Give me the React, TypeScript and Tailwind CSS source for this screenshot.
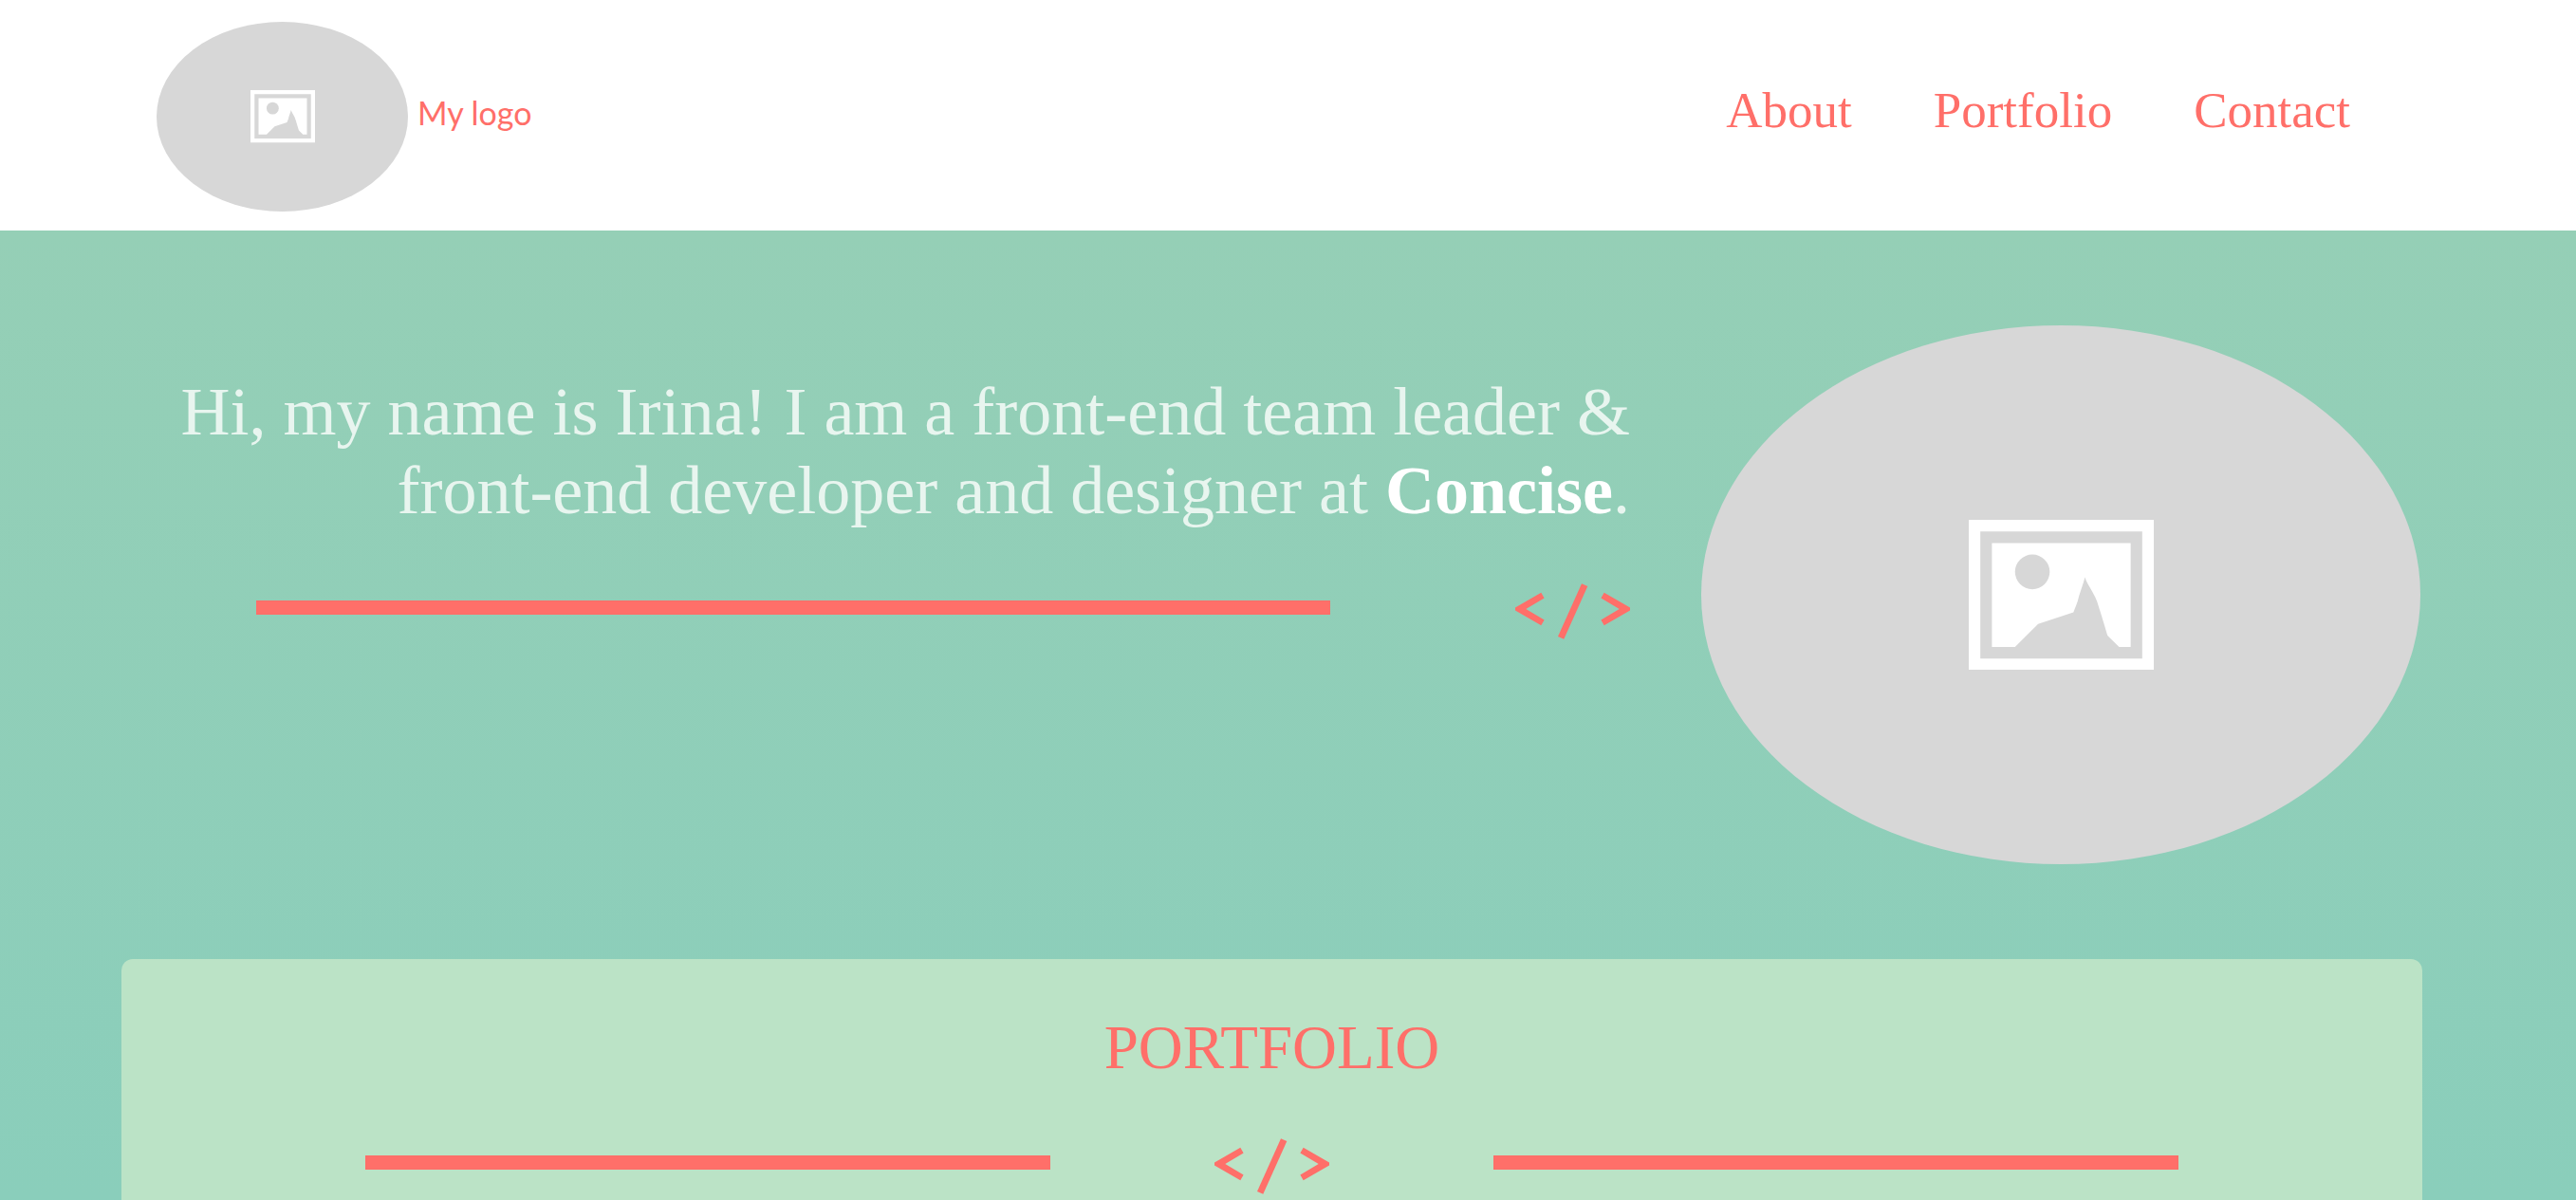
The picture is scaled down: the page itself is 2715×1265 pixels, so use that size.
import React from "react";

function PictureIcon({ className }: { className: string }) {
  return (
    <svg viewBox="0 0 16 13" className={className} aria-hidden="true">
      <path
        fill="#ffffff"
        fillRule="evenodd"
        d="M0 0H16V13H0ZM1 1V12H15V1Z"
      />
      <path
        fill="#ffffff"
        d="M2 2H14V11H13L12 10C11.7 9 11.4 8 11.2 7.4C11 6.5 10.2 5.6 10.05 4.97C9.9 5.6 9.55 6.4 9.4 7.1L9.05 8L6 9L4 11H2Z"
      />
      <circle cx="5.5" cy="4.5" r="1.5" fill="#d7d7d7" />
    </svg>
  );
}

function Placeholder({
  label,
  className,
  iconClassName,
}: {
  label: string;
  className: string;
  iconClassName: string;
}) {
  return (
    <div
      role="img"
      aria-label={label}
      className={`flex shrink-0 items-center justify-center rounded-[50%] bg-[#d7d7d7] ${className}`}
    >
      <PictureIcon className={iconClassName} />
    </div>
  );
}

function CodeIcon() {
  return (
    <svg
      viewBox="0 0 121 67"
      className="h-[67px] w-[121px] shrink-0 fill-[#ff6f69]"
      aria-hidden="true"
    >
      <path d="M0 33.5L27.3 17.7L30.6 23.6L11.3 35L30.6 46.5L27.3 52.3L0 36.5Z" />
      <path d="M70 8.3L76.3 11L51.3 66.7L45 64Z" />
      <path d="M121 33.5L93.7 17.7L90.4 23.6L109.7 35L90.4 46.5L93.7 52.3L121 36.5Z" />
    </svg>
  );
}

function Bar() {
  return <div className="h-[15px] flex-1 bg-[#ff6f69]" />;
}

const links = ["About", "Portfolio", "Contact"];

export default function App() {
  return (
    <div className="flex min-h-screen flex-col bg-white font-['Liberation_Serif',serif]">
      <header className="flex items-center justify-between pt-[23px] pr-[238px] pb-5 pl-[165px] text-[#ff6f69]">
        <a href="#" className="flex items-center gap-2.5">
          <Placeholder
            label="Logo"
            className="h-[200px] w-[265px]"
            iconClassName="w-[68px]"
          />
          <span className="pb-2 font-['Lato',sans-serif] text-[34px] leading-10">
            My logo
          </span>
        </a>
        <nav className="flex gap-[86px] pb-3.5 text-[53px] leading-[60px]">
          {links.map((link) => (
            <a key={link} href={`#${link.toLowerCase()}`}>
              {link}
            </a>
          ))}
        </nav>
      </header>

      <main className="flex flex-1 flex-col bg-linear-to-b from-[#95cfb6] to-[#8acebb] pr-[162px] pl-[128px]">
        <section id="about" className="flex items-start pt-[100px] pr-0.5 pb-[100px]">
          <div className="flex-1 pt-[50px] pr-[75px]">
            <h1 className="text-right text-[72px] leading-[83px] text-[#e8f5ef]">
              Hi, my name is Irina! I am a front-end team leader &amp;
              <br />
              front-end developer and designer at{" "}
              <strong className="font-bold text-white">Concise</strong>.
            </h1>
            <div className="mt-12 flex items-center gap-[195px] pl-[142px]">
              <Bar />
              <CodeIcon />
            </div>
          </div>
          <Placeholder
            label="Portrait"
            className="h-[568px] w-[758px]"
            iconClassName="w-[195px]"
          />
        </section>

        <section
          id="portfolio"
          className="flex-1 rounded-t-xl bg-[#bbe3c6] px-[257px] pt-[57px]"
        >
          <h2 className="text-center text-[65px] leading-[72px] text-[#ff6f69] uppercase">
            Portfolio
          </h2>
          <div className="mt-[52px] flex items-center gap-[173px]">
            <Bar />
            <CodeIcon />
            <Bar />
          </div>
        </section>
      </main>
    </div>
  );
}
